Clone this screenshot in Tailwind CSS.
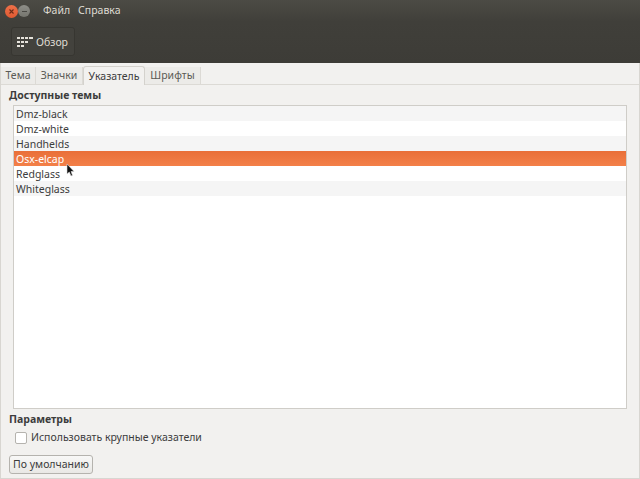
<!doctype html>
<html><head><meta charset="utf-8">
<script src="https://cdn.jsdelivr.net/npm/@tailwindcss/browser@4"></script></head>
<body class="m-0 w-[640px] h-[479px] overflow-hidden bg-[#f2f1ef] font-['Noto_Sans','Open_Sans',sans-serif] text-[10.5px] text-[#3c3c3c] relative">
<div class="h-[63px] flex flex-col">
  <div class="h-[22px] flex items-center bg-gradient-to-b from-[#4c4b45] to-[#403f3a]">
    <div class="ml-[5px] w-[13px] h-[13px] rounded-full bg-gradient-to-b from-[#ee7048] to-[#df5a32] flex items-center justify-center">
      <svg width="5" height="5" viewBox="0 0 5 5"><path d="M.5 .5L4.500 4.500M4.500 .5L.5 4.500" stroke="#6b2c18" stroke-width="1.100"/></svg>
    </div>
    <div class="w-[12px] h-[12px] rounded-full bg-gradient-to-b from-[#8e8e88] to-[#76766f] flex items-center justify-center"><div class="w-[5px] h-px bg-[#4a4944]"></div></div>
    <span class="ml-[13px] text-[#dfdbd2]">Файл</span>
    <span class="ml-[8px] text-[#dfdbd2]">Справка</span>
  </div>
  <div class="h-[41px] flex items-start pl-[11px] pt-[5px] bg-gradient-to-b from-[#403f3a] to-[#3d3c37]">
    <div class="w-[64px] h-[29px] rounded-[3px] border border-[#373631] bg-[#43423d] flex items-center pl-[5px] pt-[2px] text-[#dfdbd2]">
      <svg width="16" height="11" viewBox="0 0 16 11" fill="#e6e3dc">
        <rect x="0" y="0" width="3" height="2"/><rect x="4" y="0" width="3" height="2"/><rect x="8" y="0" width="3" height="2"/><rect x="12" y="0" width="4" height="2"/>
        <rect x="0" y="4" width="3" height="2"/><rect x="4" y="4" width="3" height="2"/><rect x="8" y="4" width="3" height="2"/>
        <rect x="0" y="8" width="3" height="2"/><rect x="4" y="8" width="3" height="2"/>
      </svg>
      <span class="ml-[3px]">Обзор</span>
    </div>
  </div>
</div>
<div class="h-[22px] pt-[4px] flex items-stretch border-b border-[#dcdad5] text-[#5a5a55] pl-[1px]">
  <div class="w-[35px] pt-[1px] flex items-center justify-center border-r border-[#dcdad5] bg-[#ecebe8]">Тема</div>
  <div class="w-[47px] pt-[1px] flex items-center justify-center border-r border-[#dcdad5] bg-[#ecebe8]">Значки</div>
  <div class="w-[62px] -mb-px -mt-[1px] pt-[2px] flex items-center justify-center border border-b-0 border-[#d4d2cd] rounded-t-[3px] bg-[#f2f1ef] text-[#3c3c3c]">Указатель</div>
  <div class="w-[56px] pt-[1px] flex items-center justify-center border-r border-[#dcdad5] bg-[#ecebe8]">Шрифты</div>
</div>
<div class="pl-[9px] pt-[3px] font-bold leading-[14px] h-[20px]">Доступные темы</div>
<div class="mx-[13px] h-[304px] border border-[#cfcdc8] bg-white leading-[15px]">
  <div class="h-[15px] pl-[2px] pt-[1px] bg-[#f5f5f5]">Dmz-black</div>
  <div class="h-[15px] pl-[2px] pt-[1px] bg-white">Dmz-white</div>
  <div class="h-[15px] pl-[2px] pt-[1px] bg-[#f5f5f5]">Handhelds</div>
  <div class="h-[15px] pl-[2px] pt-[1px] bg-gradient-to-b from-[#e96f38] to-[#f38049] text-white">Osx-elcap</div>
  <div class="h-[15px] pl-[2px] pt-[1px] bg-white">Redglass</div>
  <div class="h-[15px] pl-[2px] pt-[1px] bg-[#f5f5f5]">Whiteglass</div>
</div>
<div class="pl-[9px] pt-[3px] font-bold leading-[14px]">Параметры</div>
<div class="pl-[15px] pt-[4px] flex items-center h-[20px]">
  <div class="w-[12px] h-[12px] rounded-[2px] border border-[#b5b3ae] bg-white"></div>
  <span class="ml-[4px]">Использовать крупные указатели</span>
</div>
<div class="ml-[9px] mt-[9px] w-[84px] h-[19px] rounded-[3px] border border-[#b5b3ae] bg-gradient-to-b from-[#f8f8f7] to-[#e9e8e5] flex items-center justify-center">По умолчанию</div>
<svg class="absolute left-[66px] top-[163px]" width="9" height="14" viewBox="0 0 9 14"><path d="M1 1V11L3.300 9L5 13L6.500 12.300L5 8.500H8Z" fill="#111" stroke="#ddd" stroke-width=".6"/></svg>
<div class="absolute right-0 top-[63px] bottom-0 w-px bg-[#d8d6d1]"></div>
<div class="absolute left-0 top-[63px] bottom-0 w-px bg-[#d8d6d1]"></div>
<div class="absolute left-0 right-0 bottom-0 h-px bg-[#d8d6d1]"></div>
</body></html>
